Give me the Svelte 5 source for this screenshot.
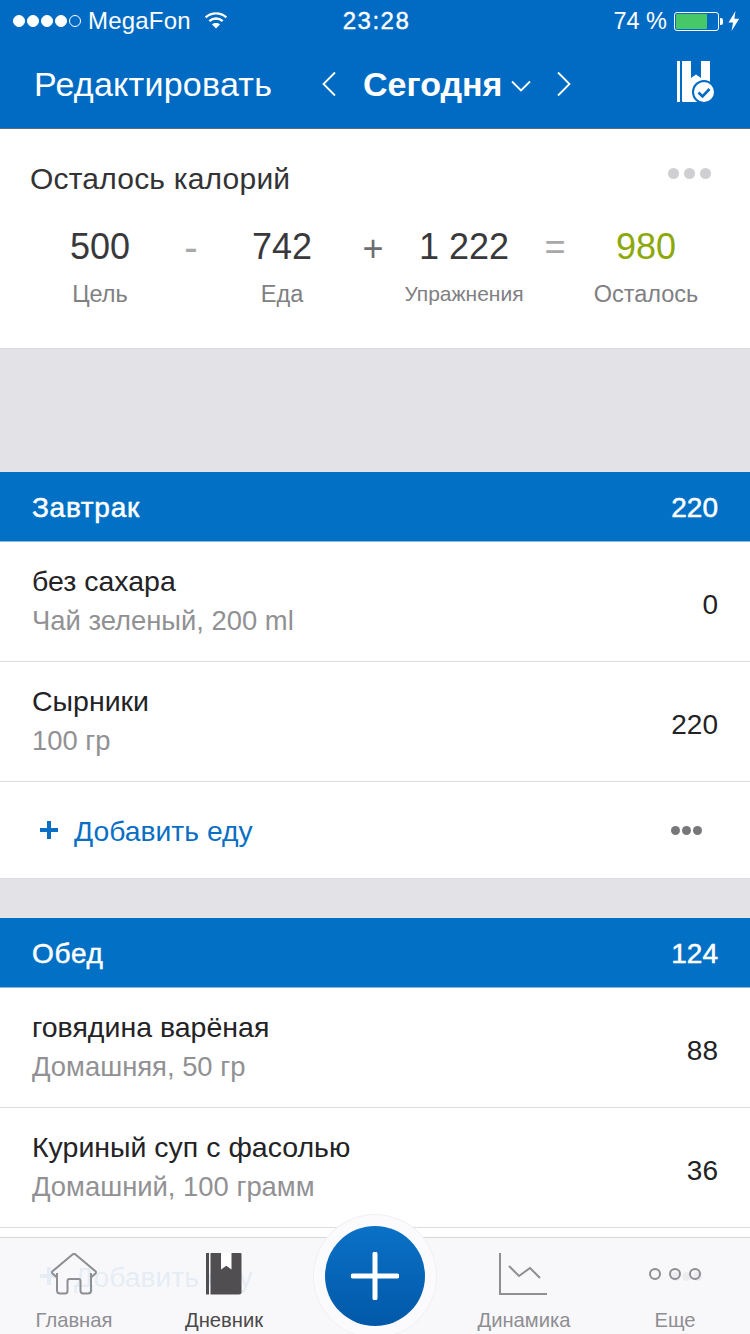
<script>
  const stats = [
    { value: '500', label: 'Цель' },
    { op: '-', cls: 'minus' },
    { value: '742', label: 'Еда' },
    { op: '+', cls: 'plus' },
    { value: '1 222', label: 'Упражнения' },
    { op: '=', cls: 'eq' },
    { value: '980', label: 'Осталось', green: true }
  ];

  const meals = [
    {
      title: 'Завтрак',
      total: '220',
      items: [
        { name: 'без сахара', sub: 'Чай зеленый, 200 ml', cal: '0' },
        { name: 'Сырники', sub: '100 гр', cal: '220' }
      ]
    },
    {
      title: 'Обед',
      total: '124',
      items: [
        { name: 'говядина варёная', sub: 'Домашняя, 50 гр', cal: '88' },
        { name: 'Куриный суп с фасолью', sub: 'Домашний, 100 грамм', cal: '36' }
      ]
    }
  ];
</script>

<div class="phone">
  <header class="top">
    <div class="status">
      <div class="carrier">
        <span class="signal">
          <i></i><i></i><i></i><i></i><i class="off"></i>
        </span>
        <span class="carrier-name">MegaFon</span>
        <svg class="wifi" width="24" height="18" viewBox="0 0 26 20" fill="none" stroke="#fff" stroke-width="2.6">
          <path d="M1.5 7.200C8 1.200 18 1.200 24.500 7.200" />
          <path d="M5.600 11.200c4.200-3.800 10.600-3.800 14.800 0" />
          <path d="M13 19.500l-4.400-4.600c2.500-2 6.300-2 8.800 0z" fill="#fff" stroke="none" />
        </svg>
      </div>
      <div class="clock">23:28</div>
      <div class="power">
        <span class="percent">74 %</span>
        <span class="battery"><span class="level"></span></span>
        <span class="nub"></span>
        <svg class="bolt" width="12" height="20" viewBox="0 0 12 20"><path d="M7.500 0L0.500 11.500H5L3.600 20L11.200 7.800H6.400z" fill="#fff" /></svg>
      </div>
    </div>
    <nav class="nav">
      <span class="edit">Редактировать</span>
      <div class="date">
        <svg width="16" height="26" viewBox="0 0 16 26" fill="none" stroke="#fff" stroke-width="1.8"><path d="M14 1.500L2.500 13L14 24.500" /></svg>
        <span class="today">Сегодня</span>
        <svg class="caret" width="20" height="12" viewBox="0 0 20 12" fill="none" stroke="#fff" stroke-width="1.8"><path d="M1 1.500l9 9 9-9" /></svg>
        <svg class="next" width="16" height="26" viewBox="0 0 16 26" fill="none" stroke="#fff" stroke-width="1.8"><path d="M2 1.500L13.500 13L2 24.500" /></svg>
      </div>
      <svg class="diary" width="38" height="42" viewBox="0 0 38 42">
        <path d="M0 0h3v41H0z" fill="#fff" />
        <path d="M5 0h28v41H6.500A1.500 1.500 0 0 1 5 39.500z" fill="#fff" />
        <path d="M14 0h10v17l-5-3.600L14 17z" fill="#016bc4" />
        <circle cx="27" cy="31" r="12" fill="#016bc4" />
        <circle cx="27" cy="31" r="10" fill="#fff" />
        <path d="M21.500 31.500l4 4 7-7.500" fill="none" stroke="#016bc4" stroke-width="2.600" />
      </svg>
    </nav>
  </header>

  <section class="summary">
    <div class="summary-head">
      <h2>Осталось калорий</h2>
      <span class="dots-light"><i></i><i></i><i></i></span>
    </div>
    <div class="values">
      {#each stats as s}
        {#if s.op}
          <span class="op {s.cls}">{s.op}</span>
        {:else}
          <span class="value" class:green={s.green}>{s.value}</span>
        {/if}
      {/each}
    </div>
    <div class="labels">
      {#each stats.filter((s) => s.label) as s}
        <span class:small={s.label === 'Упражнения'}>{s.label}</span>
      {/each}
    </div>
  </section>

  <div class="gap first"></div>

  {#each meals as meal, m}
    <section>
      <div class="meal-head">
        <span class="meal-title">{meal.title}</span>
        <span>{meal.total}</span>
      </div>
      {#each meal.items as item}
        <div class="row">
          <div class="row-text">
            <div class="name">{item.name}</div>
            <div class="sub">{item.sub}</div>
          </div>
          <div class="cal">{item.cal}</div>
        </div>
      {/each}
      <div class="add">
        <svg width="18" height="18" viewBox="0 0 18 18"><path d="M7 0h4v7h7v4h-7v7H7v-7H0V7h7z" fill="#0a6fc4" /></svg>
        <span class="add-label">Добавить еду</span>
        <span class="dots-dark"><i></i><i></i><i></i></span>
      </div>
    </section>
    {#if m === 0}
      <div class="gap"></div>
    {/if}
  {/each}

  <footer class="tabbar">
    <div class="tab">
      <svg width="48" height="42" viewBox="0 0 48 42" fill="none" stroke="#8e8e93" stroke-width="2">
        <path d="M7 24.500L2.500 20.500a1.500 1.500 0 0 1 0-2.200L22.500 1.500a2.300 2.300 0 0 1 3 0l20 16.800a1.500 1.500 0 0 1 0 2.200L41 24.500" />
        <path d="M7 20v17.500a3 3 0 0 0 3 3h5a2.500 2.500 0 0 0 2.500-2.500V28a2 2 0 0 1 2-2h9a2 2 0 0 1 2 2v10a2.500 2.500 0 0 0 2.500 2.500h5a3 3 0 0 0 3-3V20" />
      </svg>
      <span>Главная</span>
    </div>
    <div class="tab active">
      <svg width="36" height="42" viewBox="0 0 36 42">
        <path d="M0 0h3v41.500H0z" fill="#514e51" />
        <path d="M4.500 0h30a1 1 0 0 1 1 1v38a2.500 2.500 0 0 1-2.500 2.500H4.500z" fill="#514e51" />
        <path d="M15 0h10.500v16.500l-5.200-3.800-5.300 3.800z" fill="#fff" />
      </svg>
      <span>Дневник</span>
    </div>
    <div class="tab spacer"></div>
    <div class="tab">
      <svg class="chart" width="48" height="42" viewBox="0 0 48 42" fill="none" stroke="#8e8e93" stroke-width="2">
        <path d="M1 0v41h47" />
        <path d="M10 13l10 10 11-8 10 10" />
      </svg>
      <span>Динамика</span>
    </div>
    <div class="tab">
      <svg width="52" height="42" viewBox="0 0 52 42" fill="none" stroke="#8e8e93" stroke-width="2">
        <circle cx="6" cy="21" r="5" />
        <circle cx="26" cy="21" r="5" />
        <circle cx="46" cy="21" r="5" />
      </svg>
      <span>Еще</span>
    </div>
  </footer>

  <button class="fab" aria-label="Добавить">
    <svg width="48" height="48" viewBox="0 0 48 48"><path d="M24 2v44M2 24h44" stroke="#fff" stroke-width="5" stroke-linecap="round" /></svg>
  </button>
</div>

<style>
  :global(body) {
    margin: 0;
  }

  * {
    box-sizing: border-box;
  }

  .phone {
    position: relative;
    width: 750px;
    height: 1334px;
    overflow: hidden;
    background: #fff;
    font-family: "Liberation Sans", Arial, sans-serif;
    color: #232326;
  }

  .top {
    height: 129px;
    background: #016bc4;
    border-bottom: 1px solid #5a6f82;
    color: #fff;
  }

  .status {
    height: 40px;
    display: grid;
    grid-template-columns: 1fr auto 1fr;
    align-items: center;
    padding: 2px 10px 0 13px;
    font-size: 24px;
  }

  .carrier {
    display: flex;
    align-items: center;
  }

  .signal {
    display: flex;
    gap: 2px;
  }

  .signal i {
    width: 12px;
    height: 12px;
    border-radius: 50%;
    background: #fff;
    border: 1px solid #fff;
  }

  .signal i.off {
    background: none;
  }

  .carrier-name {
    margin-left: 7px;
    letter-spacing: 0.2px;
  }

  .wifi {
    margin-left: 13px;
    margin-top: -3px;
  }

  .clock {
    letter-spacing: 1.500px;
    -webkit-text-stroke: 0.4px #fff;
  }

  .power {
    display: flex;
    align-items: center;
    justify-content: flex-end;
  }

  .percent {
    margin-right: 7px;
    font-size: 23.500px;
  }

  .battery {
    width: 45px;
    height: 19px;
    border: 1px solid #fff;
    border-radius: 3px;
    padding: 1px;
    display: flex;
  }

  .level {
    width: 31px;
    background: #46c868;
    border-radius: 1px;
  }

  .nub {
    width: 3px;
    height: 7px;
    margin-left: 1px;
    background: #fff;
    border-radius: 0 2px 2px 0;
  }

  .bolt {
    margin-left: 5px;
  }

  .nav {
    height: 88px;
    display: flex;
    align-items: center;
    padding: 0 35px 0 34px;
  }

  .edit {
    font-size: 34px;
    letter-spacing: 0.25px;
    width: 287px;
  }

  .date {
    display: flex;
    align-items: center;
    flex: 1;
  }

  .today {
    font-size: 34px;
    font-weight: 700;
    margin-left: 26px;
  }

  .caret {
    margin-left: 9px;
    margin-top: 3px;
  }

  .next {
    margin-left: 25px;
  }

  .diary {
    margin-bottom: 5px;
  }

  .summary {
    height: 219px;
    padding-top: 33px;
  }

  .summary-head {
    display: flex;
    justify-content: space-between;
    padding: 0 39px 0 30px;
  }

  h2 {
    margin: 0;
    font-size: 30px;
    font-weight: 400;
    letter-spacing: 0.2px;
    line-height: 34px;
    color: #333336;
  }

  .dots-light,
  .dots-dark {
    display: flex;
  }

  .dots-light {
    gap: 5px;
    padding-top: 6px;
  }

  .dots-light i {
    width: 11px;
    height: 11px;
    border-radius: 50%;
    background: #cfcfd1;
  }

  .values {
    display: grid;
    grid-template-columns: repeat(7, 91px);
    justify-content: start;
    margin: 28px 0 0 54.500px;
    height: 40px;
    align-items: center;
  }

  .value,
  .op {
    display: flex;
    justify-content: center;
    white-space: nowrap;
    font-size: 36px;
    line-height: 40px;
    color: #39393c;
  }

  .value.green {
    color: #8ca80a;
  }

  .op.minus,
  .op.eq {
    color: #a8a8aa;
  }

  .op.minus {
    font-size: 40px;
  }

  .op.plus {
    color: #6e6e72;
    padding-top: 5px;
  }

  .labels {
    display: grid;
    grid-template-columns: repeat(4, 182px);
    margin: 16px 0 0 9px;
  }

  .labels span {
    text-align: center;
    font-size: 23.500px;
    line-height: 28px;
    color: #808083;
  }

  .labels span.small {
    font-size: 21px;
  }

  .gap {
    height: 40px;
    background: #e3e2e6;
    border-top: 1px solid #dcdbdf;
  }

  .gap.first {
    height: 124px;
  }

  .meal-head {
    height: 70px;
    padding: 3px 32px 0;
    background: #0270c4;
    border-bottom: 1px solid #8fb8dc;
    color: #fff;
    display: flex;
    align-items: center;
    justify-content: space-between;
    font-size: 28px;
    -webkit-text-stroke: 0.5px #fff;
  }

  .meal-title {
    letter-spacing: 0.7px;
  }

  .row {
    height: 120px;
    display: flex;
    align-items: center;
    justify-content: space-between;
    padding: 0 32px;
    border-bottom: 1px solid #dddde0;
  }

  .row-text {
    margin-top: -2px;
  }

  .name {
    font-size: 28.500px;
    line-height: 34px;
    color: #232326;
  }

  .sub {
    font-size: 27.400px;
    line-height: 34px;
    margin-top: 6px;
    color: #919194;
  }

  .cal {
    font-size: 28px;
    padding-top: 6px;
  }

  .add {
    height: 96px;
    display: flex;
    align-items: center;
    padding: 0 48px 0 40px;
  }

  .add-label {
    font-size: 28.300px;
    color: #0a6fc4;
    margin-left: 16px;
    margin-top: 3px;
    flex: 1;
  }

  .dots-dark {
    gap: 2px;
    margin-top: 1px;
  }

  .dots-dark i {
    width: 9px;
    height: 9px;
    border-radius: 50%;
    background: #77777a;
  }

  .tabbar {
    position: absolute;
    left: 0;
    right: 0;
    bottom: 0;
    height: 97px;
    display: grid;
    grid-template-columns: 148px 152px 148px 152px 150px;
    background: rgba(247, 247, 250, 0.92);
    border-top: 1px solid #d6d6d9;
  }

  .tab {
    display: flex;
    flex-direction: column;
    align-items: center;
    padding-top: 15px;
    font-size: 20.200px;
    color: #8e8e93;
    gap: 13px;
  }

  .tab span {
    line-height: 24px;
    white-space: nowrap;
  }

  .tab.active {
    color: #4a484b;
  }

  .chart {
    margin-left: -2px;
  }

  .fab {
    position: absolute;
    left: 325px;
    top: 1226px;
    width: 100px;
    height: 100px;
    padding: 0;
    border: 0;
    border-radius: 50%;
    display: flex;
    align-items: center;
    justify-content: center;
    background: linear-gradient(#0a71c6, #0258a8);
    box-shadow: 0 0 0 11px #fbfbfd, 0 0 0 12px #f0f0f3;
  }
</style>
